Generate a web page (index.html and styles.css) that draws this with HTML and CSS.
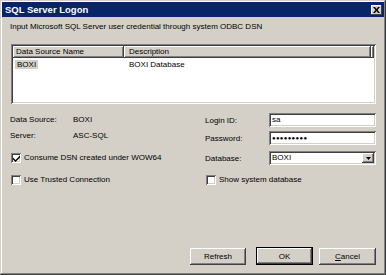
FILE: index.html
```html
<!DOCTYPE html>
<html lang="en">
<head>
  <meta charset="UTF-8" />
  <title>SQL Server Logon</title>
  <link rel="stylesheet" href="styles.css">
</head>
<body>
  <div class="window">
    <div class="titlebar">
      <span class="title">SQL Server Logon</span>
      <div class="close-btn">
        <svg width="7" height="6" viewBox="0 0 7 6"><path d="M0 0h2l1.5 2 1.5-2h2l-2.5 3 2.5 3h-2l-1.5-2-1.5 2h-2l2.5-3z" fill="#000"/></svg>
      </div>
    </div>

    <div class="content">
      <p class="intro">Input Microsoft SQL Server user credential through system ODBC DSN</p>

      <div class="listview">
        <div class="lv-header">
          <div class="lv-col col-name">Data Source Name</div>
          <div class="lv-col col-desc">Description</div>
          <div class="lv-col col-end"></div>
        </div>
        <div class="lv-row">
          <div class="col-name"><span class="selected">BOXI</span></div>
          <div class="col-desc">BOXI Database</div>
        </div>
      </div>

      <div class="details">
        <div class="left">
          <div class="info first"><span class="info-label">Data Source:</span><span>BOXI</span></div>
          <div class="info"><span class="info-label">Server:</span><span>ASC-SQL</span></div>
          <label class="check first-check"><span class="box checked"><svg width="7" height="7" viewBox="0 0 7 7"><path d="M0 2.5l2.5 2.5 4.5-4.5v2l-4.5 4.5-2.5-2.5z" fill="#000"/></svg></span>Consume DSN created under WOW64</label>
          <label class="check"><span class="box"></span>Use Trusted Connection</label>
        </div>
        <div class="right">
          <div class="field first"><span class="field-label">Login ID:</span><div class="input">sa</div></div>
          <div class="field"><span class="field-label">Password:</span><div class="input dots">●●●●●●●●●</div></div>
          <div class="field db"><span class="field-label">Database:</span><div class="input select">BOXI<span class="drop"><svg width="5" height="3" viewBox="0 0 5 3"><path d="M0 0h5l-2.5 3z" fill="#000"/></svg></span></div></div>
          <label class="check"><span class="box"></span>Show system database</label>
        </div>
      </div>

      <div class="buttons">
        <div class="btn refresh">Refresh</div>
        <div class="btn-default"><div class="btn">OK</div></div>
        <div class="btn cancel"><u>C</u>ancel</div>
      </div>
    </div>
  </div>
</body>
</html>
```

FILE: styles.css
```css
:root {
  --face: #d4d0c8;
  --shadow: #808080;
  --dark: #404040;
  --title: #0a246a;
}

body {
  margin: 0;
  font-family: "Liberation Sans", Arial, sans-serif;
  font-size: 8px;
  color: #000;
  background: var(--face);
}

.window {
  width: 386px;
  height: 275px;
  box-sizing: border-box;
  padding: 2px;
  background: var(--face);
  display: flex;
  flex-direction: column;
  box-shadow: inset -1px -1px var(--dark), inset 1px 1px var(--face),
    inset -2px -2px var(--shadow), inset 2px 2px #fff;
}

.titlebar {
  height: 15px;
  background: var(--title);
  display: flex;
  align-items: center;
  padding: 0 2px 0 3px;
}

.title {
  color: #fff;
  font-weight: bold;
  font-size: 9.5px;
}

.close-btn {
  margin-left: auto;
  width: 11px;
  height: 10px;
  background: var(--face);
  display: flex;
  align-items: center;
  justify-content: center;
  box-shadow: inset -1px -1px var(--dark), inset 1px 1px #fff;
}

.content {
  flex: 1;
  display: flex;
  flex-direction: column;
  padding: 0 8px 8px 8px;
}

.intro {
  margin: 4px 0 0;
  line-height: 12px;
}

.listview {
  margin: 11px 0 0 1px;
  width: 365px;
  height: 60px;
  box-sizing: border-box;
  padding: 2px;
  background: #fff;
  box-shadow: inset 1px 1px var(--shadow), inset -1px -1px #fff,
    inset 2px 2px var(--dark), inset -2px -2px var(--face);
}

.lv-header {
  display: flex;
  height: 12px;
}

.lv-col {
  background: var(--face);
  line-height: 12px;
  box-sizing: border-box;
  padding-left: 3px;
  box-shadow: inset -1px -1px var(--dark), inset 1px 1px #fff,
    inset -2px -2px var(--shadow);
}

.col-name {
  width: 111px;
  box-sizing: border-box;
  padding-left: 3px;
}

.col-desc {
  width: 247px;
  box-sizing: border-box;
  padding-left: 5px;
}

.col-end {
  flex: 1;
  padding: 0;
}

.lv-row {
  display: flex;
  margin-top: 2px;
  line-height: 10px;
}

.lv-row .col-name {
  padding-left: 2px;
}

.selected {
  background: var(--face);
  padding: 0 2px;
}

.details {
  display: flex;
}

.left {
  width: 195px;
  display: flex;
  flex-direction: column;
}

.info {
  display: flex;
  line-height: 12px;
  margin-top: 4px;
}

.info.first {
  margin-top: 10px;
}

.info-label {
  width: 63px;
}

.check {
  display: flex;
  align-items: center;
  line-height: 12px;
  margin-top: 10px;
}

.left .check {
  margin-left: 1px;
}

.box {
  width: 10px;
  height: 10px;
  box-sizing: border-box;
  margin-right: 3px;
  background: #fff;
  display: flex;
  align-items: center;
  justify-content: center;
  box-shadow: inset 1px 1px var(--shadow), inset -1px -1px #fff,
    inset 2px 2px var(--dark), inset -2px -2px var(--face);
}

.right {
  width: 171px;
  display: flex;
  flex-direction: column;
}

.field {
  display: flex;
  align-items: center;
  height: 14px;
  margin-top: 4px;
}

.field.first {
  margin-top: 9px;
}

.field.db {
  margin-top: 6px;
}

.field-label {
  width: 64px;
}

.input {
  width: 107px;
  height: 14px;
  box-sizing: border-box;
  padding: 0 3px;
  line-height: 14px;
  background: #fff;
  display: flex;
  align-items: center;
  box-shadow: inset 1px 1px var(--shadow), inset -1px -1px #fff,
    inset 2px 2px var(--dark), inset -2px -2px var(--face);
}

.dots {
  font-size: 6px;
  letter-spacing: 0.3px;
}

.select {
  padding-right: 2px;
}

.drop {
  margin-left: auto;
  width: 12px;
  height: 10px;
  background: var(--face);
  display: flex;
  align-items: center;
  justify-content: center;
  box-shadow: inset -1px -1px var(--dark), inset 1px 1px #fff,
    inset -2px -2px var(--shadow);
}

.right .check {
  margin-top: 9px;
  margin-left: 1px;
}

.buttons {
  margin-top: auto;
  display: flex;
  justify-content: flex-end;
  align-items: center;
  gap: 6px;
}

.btn {
  width: 56px;
  height: 17px;
  box-sizing: border-box;
  background: var(--face);
  display: flex;
  align-items: center;
  justify-content: center;
  box-shadow: inset -1px -1px var(--dark), inset 1px 1px #fff,
    inset -2px -2px var(--shadow);
}

.refresh {
  margin-right: 4px;
}

.btn-default {
  border: 1px solid #000;
}

.btn-default .btn {
  width: 55px;
  height: 16px;
}

.cancel {
  width: 57px;
}
```
